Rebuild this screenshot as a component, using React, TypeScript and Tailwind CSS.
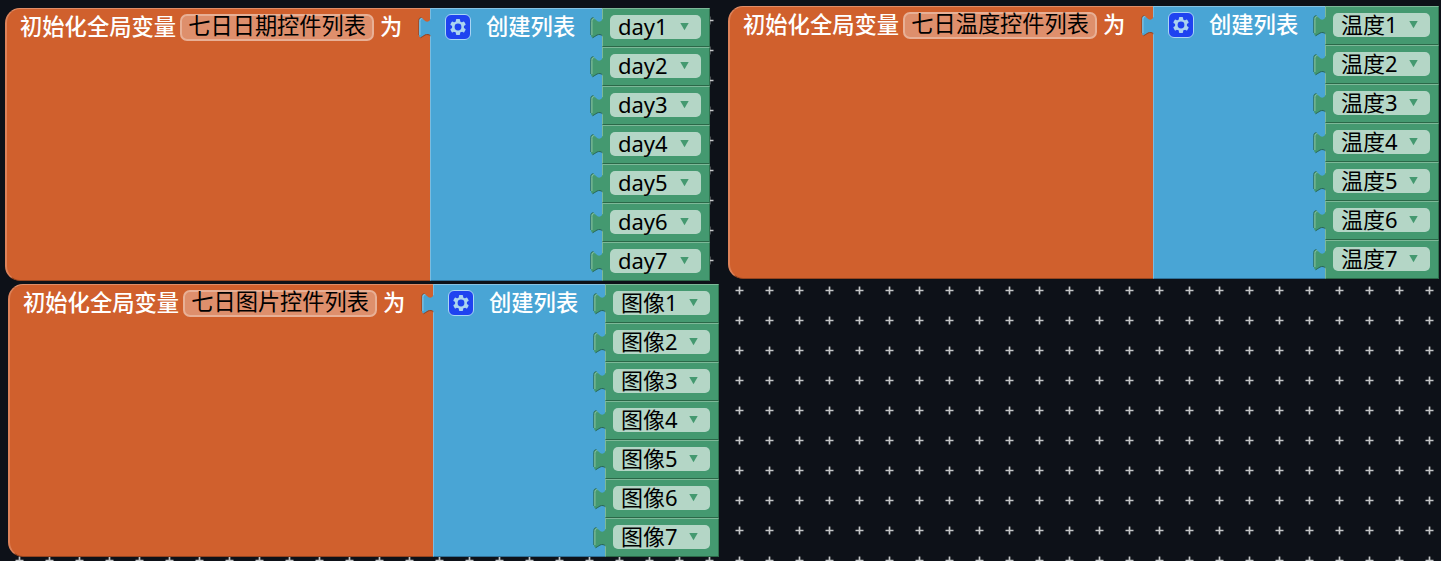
import React from "react";

type BlockData = {
  x: string;
  name: string;
  item: string;
  slotWidth: string;
  pillWidth: string;
};

const FONT = "font-['Noto_Sans','Noto_Sans_CJK_SC',sans-serif]";

const blocks: BlockData[] = [
  { x: "left-[5px] top-[8px]", name: "七日日期控件列表", item: "day", slotWidth: "w-[108px]", pillWidth: "w-[91px]" },
  { x: "left-[728px] top-[6px]", name: "七日温度控件列表", item: "温度", slotWidth: "w-[114px]", pillWidth: "w-[97px]" },
  { x: "left-[8px] top-[284px]", name: "七日图片控件列表", item: "图像", slotWidth: "w-[114px]", pillWidth: "w-[97px]" },
];

function Connector({ fill, light, dark, className }: { fill: string; light: string; dark: string; className: string }) {
  return (
    <svg className={className} width="15" height="22" viewBox="0 0 15 22" fill="none">
      <path
        d="M15 2 H12.5 C11.5 4.3 9.5 5.3 7.5 4.3 L4 1.2 C2.2 .2 1 1.5 1 4 V17.5 C1 20.5 2.2 21.3 4 19.8 L6.5 18 C8.5 16.8 11 17 12.5 18.5 H15 Z"
        fill={fill}
      />
      <path d="M2.5 20.8 C4 20.3 5.5 18.6 7 18 C9 17.2 11 17.4 12.5 18.8" stroke={dark} strokeWidth="1" />
      <path d="M.7 18 V3.5 C.8 1.5 1.8 .6 3.5 .7" stroke={dark} strokeWidth=".8" />
      <path d="M1.9 18 V4.5 C1.9 2.2 2.7 1.3 4.3 1.8" stroke={light} strokeWidth="1" />
    </svg>
  );
}

function Gear() {
  return (
    <span className="flex h-[26px] w-[26px] shrink-0 items-center justify-center rounded-[6px] border border-[#a9d5f5] bg-[#1f43f0]">
      <svg width="18" height="18" viewBox="0 0 18 18" fill="none">
        <g fill="#abd4ef">
          {[0, 60, 120].map((a) => (
            <rect key={a} x="6.9" y="1" width="4.2" height="16" rx="1" transform={"rotate(" + a + " 9 9)"} />
          ))}
          <circle cx="9" cy="9" r="6" />
        </g>
        <circle cx="9" cy="9" r="3.4" fill="#1f43f0" />
      </svg>
    </span>
  );
}

function Slot({ label, slotWidth, pillWidth }: { label: string; slotWidth: string; pillWidth: string }) {
  return (
    <div className={"relative flex h-[39px] border-t border-b border-l border-r border-t-[#7db898] border-b-[#2b6848] border-l-[#7db898] border-r-[#2e704d] bg-[#449970] pt-[6px] pl-[7px] " + slotWidth}>
      <Connector className="absolute top-[8px] -left-[13px]" fill="#449970" light="#8fc4a6" dark="#28634a" />
      <div className={"flex h-6 items-center justify-between rounded-[5px] bg-[#b4d6c6] pr-[12px] pl-[8px] " + pillWidth}>
        <span className="relative -top-px text-[22px] leading-6 whitespace-nowrap text-black">{label}</span>
        <svg width="9" height="8" viewBox="0 0 9 8" className="shrink-0">
          <path d="M.3 0 H8.7 L4.5 7.3 Z" fill="#449970" />
        </svg>
      </div>
    </div>
  );
}

function Block({ x, name, item, slotWidth, pillWidth }: BlockData) {
  return (
    <div className={"absolute flex h-[273px] " + x}>
      <div className="flex w-[425px] items-start rounded-l-[15px] border-t border-b border-l-2 border-t-[#e08d67] border-b-[#94441f] border-l-[#dd8259] bg-[#d0602d] pt-[5px] pl-[13px] text-white">
        <span className="-mt-[0.5px] text-[22.3px] leading-[26px] font-medium whitespace-nowrap">初始化全局变量</span>
        <span className="ml-[4px] flex h-[27px] w-[194px] shrink-0 items-center justify-center rounded-[7px] border-[2.5px] border-[#e8b096] bg-[#de8f6c] pb-[3px] text-[22.2px] leading-[20px] whitespace-nowrap text-black">
          {name}
        </span>
        <span className="-mt-[0.5px] ml-[6px] text-[22.3px] leading-[26px] font-medium">为</span>
      </div>
      <div className="relative flex w-[172px] items-start border-t border-b border-l border-t-[#86c3e4] border-b-[#2f7199] border-l-[#7abce0] bg-[#49a5d5] pt-[5px] pl-[14px] text-white">
        <Connector className="absolute top-[8px] -left-[13px]" fill="#49a5d5" light="#8fcbea" dark="#8a4529" />
        <Gear />
        <span className="-mt-[0.5px] ml-[15px] text-[22.3px] leading-[26px] font-medium whitespace-nowrap">创建列表</span>
      </div>
      <div className="flex flex-col">
        {[1, 2, 3, 4, 5, 6, 7].map((n) => (
          <Slot key={n} label={item + n} slotWidth={slotWidth} pillWidth={pillWidth} />
        ))}
      </div>
    </div>
  );
}

function Crosses() {
  const points: [number, number][] = [];
  for (let y = 20; y <= 260; y += 30) points.push([709.5, y + 0.5]);
  for (let x = 19.5; x < 1441; x += 30) points.push([x, 560.5]);
  for (let y = 290.5; y < 540; y += 30) for (let x = 739.5; x < 1441; x += 30) points.push([x, y]);
  return (
    <svg className="absolute inset-0" width="1441" height="561" viewBox="0 0 1441 561">
      {points.map(([x, y]) => (
        <path key={x + "-" + y} d={"M" + (x - 4) + " " + y + "h8M" + x + " " + (y - 4) + "v8"} stroke="#c3c5c7" strokeWidth="1.7" />
      ))}
    </svg>
  );
}

export default function App() {
  return (
    <main className={"relative h-[561px] w-[1441px] overflow-hidden bg-[#0d1118] " + FONT}>
      <Crosses />
      {blocks.map((b) => (
        <Block key={b.name} {...b} />
      ))}
    </main>
  );
}
